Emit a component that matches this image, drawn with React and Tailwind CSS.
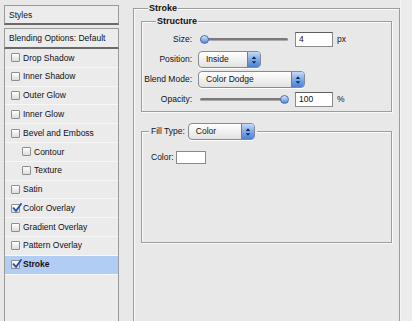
import React from 'react';

const effects = [
  { label: 'Drop Shadow' },
  { label: 'Inner Shadow' },
  { label: 'Outer Glow' },
  { label: 'Inner Glow' },
  { label: 'Bevel and Emboss' },
  { label: 'Contour', indent: true },
  { label: 'Texture', indent: true },
  { label: 'Satin' },
  { label: 'Color Overlay', checked: true },
  { label: 'Gradient Overlay' },
  { label: 'Pattern Overlay' },
  { label: 'Stroke', checked: true, selected: true },
];

const Checkbox = ({ checked }) => (
  <span className="relative w-[9px] h-[9px] shrink-0 rounded-[1px] border border-[#8e8e8e] bg-gradient-to-b from-white to-[#dcdcdc]">
    {checked && (
      <svg viewBox="0 0 10 10" className="absolute -top-[2px] left-0 w-[10px] h-[10px]">
        <path d="M1.5 5.2 L4 8 L9 1" fill="none" stroke="#1f4fa8" strokeWidth="1.8" strokeLinecap="round" strokeLinejoin="round" />
      </svg>
    )}
  </span>
);

const Select = ({ label, width }) => (
  <div className={`flex h-[17px] ${width} rounded-[4px] border border-[#8a8a8a] bg-gradient-to-b from-white to-[#e2e2e2] overflow-hidden shadow-[0_1px_0_#fff]`}>
    <span className="flex-1 pl-[7px] leading-[15px] text-[#111]">{label}</span>
    <span className="w-[13px] flex items-center justify-center border-l border-[#5c7fb8] bg-gradient-to-b from-[#c4dbf6] via-[#7eaae6] to-[#4a80d6]">
      <svg viewBox="0 0 8 12" className="w-[6px] h-[10px]">
        <path d="M4 1 L7 4.5 H1 Z M4 11 L7 7.5 H1 Z" fill="#10254d" />
      </svg>
    </span>
  </div>
);

const Slider = ({ value }) => (
  <div className="relative w-[88px] h-[11px] flex items-center">
    <div className="w-full h-[3px] rounded-full bg-[#7a7a7a] border-b border-[#aaa]" />
    <span
      className="absolute top-[1px] w-[9px] h-[9px] rounded-full border border-[#4a6fa8] bg-gradient-to-b from-[#d8e7fa] to-[#4f86d8]"
      style={{ left: `${value * 0.8}px` }}
    />
  </div>
);

const Field = ({ value }) => (
  <div className="w-[38px] h-[15px] border border-[#8a8a8a] border-t-[#5e5e5e] bg-white pl-[3px] leading-[13px] text-[#111]">
    {value}
  </div>
);

const Row = ({ label, children }) => (
  <div className="flex items-center h-[17px]">
    <span className="w-[50px] text-right text-[#111]">{label}</span>
    <div className="flex items-center ml-[6px]">{children}</div>
  </div>
);

export default function App() {
  return (
    <div className="w-[412px] h-[321px] overflow-hidden bg-[#e8e8e8] flex font-['Liberation_Sans',Arial,sans-serif] text-[8.5px] text-[#111]">
      {/* left: styles list */}
      <div className="ml-[4px] w-[115px] pt-[5px] flex flex-col shrink-0">
        <div className="h-[20px] border border-[#9a9a9a] border-b-2 border-b-[#6a6a6a] bg-[#ececec] pl-[4px] leading-[18px]">
          Styles
        </div>
        <div className="mt-[3px] h-[21px] border border-[#9a9a9a] border-b-2 border-b-[#6a6a6a] bg-[#ececec] pl-[4px] leading-[18px]">
          Blending Options: Default
        </div>
        <div className="flex-1 border-x border-[#9a9a9a] bg-[#ebebeb]">
          {effects.map((e) => (
            <div
              key={e.label}
              className={`flex items-center gap-[2px] h-[18.8px] border-b border-[#f7f7f7] ${e.indent ? 'pl-[17px]' : 'pl-[6px]'} ${e.selected ? 'bg-[#b1cdf3] font-bold' : ''}`}
            >
              <Checkbox checked={e.checked} />
              <span className="pl-[1px]">{e.label}</span>
            </div>
          ))}
        </div>
      </div>

      {/* right: stroke settings */}
      <div className="flex-1 flex">
        <fieldset className="ml-[14px] mt-[3px] w-[267px] h-[340px] border border-[#9c9c9c] shadow-[inset_1px_1px_0_#fafafa]">
          <legend className="ml-[14px] px-[1px] font-bold leading-[10px] text-[9px] bg-[#e8e8e8]">Stroke</legend>

          <fieldset className="mx-[7px] mt-[3px] border border-[#9c9c9c] shadow-[inset_1px_1px_0_#fafafa,1px_1px_0_#fafafa] pb-[3px]">
            <legend className="ml-[14px] px-[1px] font-bold leading-[10px] text-[9px] bg-[#e8e8e8]">Structure</legend>
            <div className="pt-[5px] flex flex-col gap-[3px]">
              <Row label="Size:">
                <div className="ml-[2px]"><Slider value={0} /></div>
                <div className="ml-[7px]"><Field value="4" /></div>
                <span className="ml-[4px]">px</span>
              </Row>
              <Row label="Position:">
                <Select label="Inside" width="w-[63px]" />
              </Row>
              <Row label="Blend Mode:">
                <Select label="Color Dodge" width="w-[107px]" />
              </Row>
              <Row label="Opacity:">
                <div className="ml-[2px]"><Slider value={100} /></div>
                <div className="ml-[7px]"><Field value="100" /></div>
                <span className="ml-[4px]">%</span>
              </Row>
            </div>
          </fieldset>

          <fieldset className="mx-[7px] mt-[11px] border border-[#9c9c9c] shadow-[inset_1px_1px_0_#fafafa,1px_1px_0_#fafafa]">
            <legend className="ml-[7px] px-[2px] bg-[#e8e8e8]">
              <div className="flex items-center gap-[3px]">
                <span>Fill Type:</span>
                <Select label="Color" width="w-[67px]" />
              </div>
            </legend>
            <div className="h-[102px] pt-[11px] pl-[9px]">
              <div className="flex items-center gap-[2px] h-[13px]">
                <span>Color:</span>
                <span className="w-[30px] h-[13px] border border-[#8a8a8a] bg-white" />
              </div>
            </div>
          </fieldset>
        </fieldset>
        <div className="flex-1 border-l border-[#f6f6f6] bg-[#ececec]" />
      </div>
    </div>
  );
}
